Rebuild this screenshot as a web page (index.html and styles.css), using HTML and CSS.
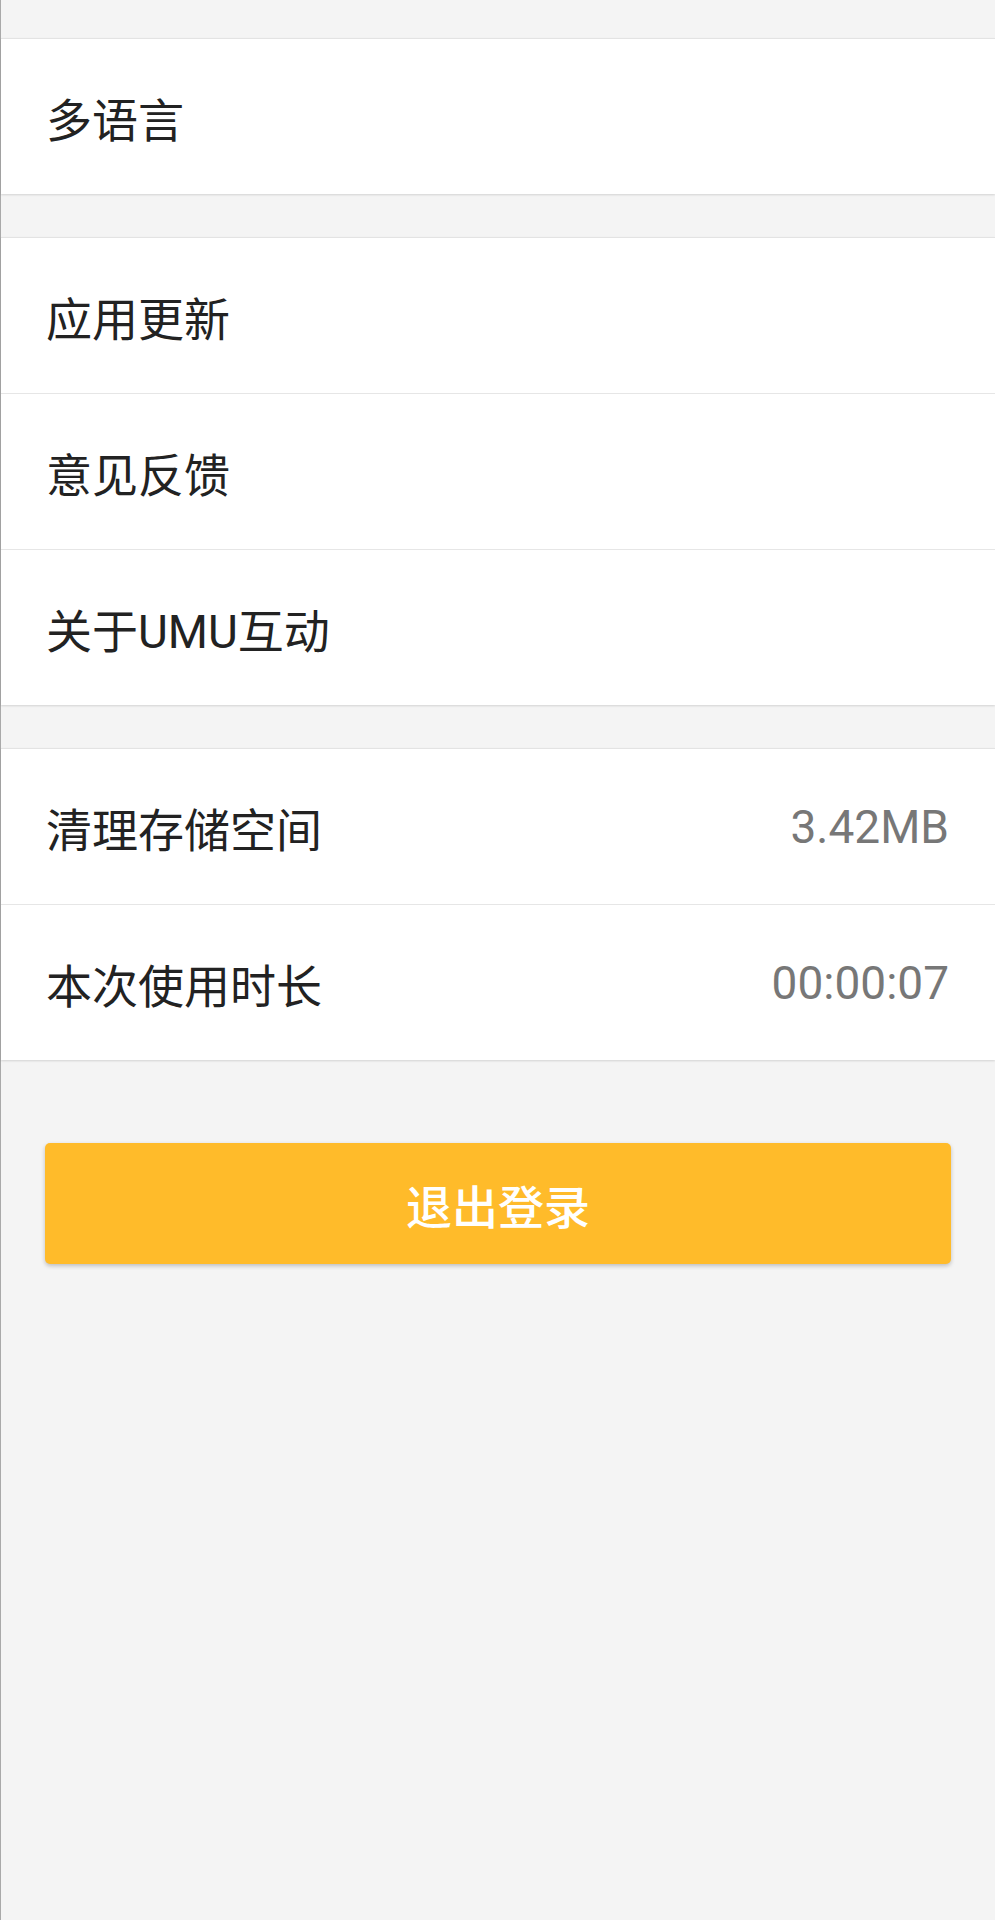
FILE: index.html
```html
<!DOCTYPE html>
<html lang="zh-CN">
<head>
<meta charset="utf-8">
<title>设置</title>
<link rel="stylesheet" href="styles.css">
</head>
<body>
<div class="page">
  <section class="group group-first">
    <div class="row"><span class="label">多语言</span></div>
  </section>
  <section class="group">
    <div class="row"><span class="label">应用更新</span></div>
    <div class="row"><span class="label">意见反馈</span></div>
    <div class="row"><span class="label">关于UMU互动</span></div>
  </section>
  <section class="group">
    <div class="row"><span class="label">清理存储空间</span><span class="value">3.42MB</span></div>
    <div class="row"><span class="label">本次使用时长</span><span class="value">00:00:07</span></div>
  </section>
  <div class="actions">
    <button class="logout" type="button">退出登录</button>
  </div>
</div>
</body>
</html>
```

FILE: styles.css
```css
html, body {
  margin: 0;
  padding: 0;
}
body {
  background: #f4f4f4;
  font-family: Roboto, "Noto Sans CJK SC", "Noto Sans", sans-serif;
}
.page {
  min-height: 1920px;
  box-sizing: border-box;
  border-left: 1px solid #a9a9a9;
  background: #f4f4f4;
  display: flex;
  flex-direction: column;
  padding-top: 38px;
}
.group {
  background: #ffffff;
  border-top: 1px solid #e3e3e3;
  box-shadow: 0 1px 2px rgba(0, 0, 0, 0.14);
  margin-top: 43px;
  display: flex;
  flex-direction: column;
}
.group-first {
  margin-top: 0;
}
.row {
  height: 155px;
  display: flex;
  align-items: center;
  justify-content: space-between;
  padding: 0 46px 0 45px;
  border-bottom: 1px solid #e6e6e6;
}
.row:last-child {
  border-bottom: none;
}
.label {
  font-size: 46px;
  color: #222222;
  padding-top: 1px;
}
.value {
  font-size: 46px;
  color: #777777;
  padding-top: 1px;
}
.actions {
  padding: 83px 44px 0 44px;
}
.logout {
  display: block;
  width: 100%;
  height: 121px;
  border: none;
  border-radius: 5px;
  background: #ffbb2a;
  color: #ffffff;
  font-family: "Noto Sans CJK SC", Roboto, sans-serif;
  font-size: 46px;
  font-weight: 500;
  box-shadow: 0 2px 4px rgba(0, 0, 0, 0.22);
  padding: 0;
}
```
